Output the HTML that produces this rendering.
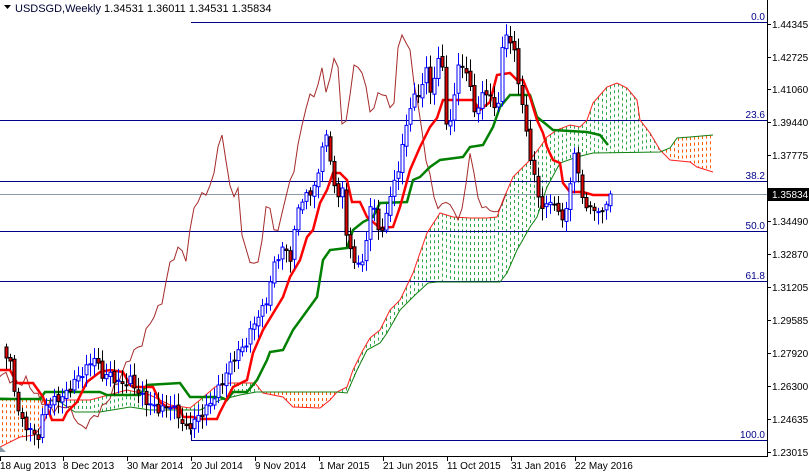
<!DOCTYPE html>
<html><head><meta charset="utf-8"><style>
html,body{margin:0;padding:0;background:#fff;width:809px;height:472px;overflow:hidden}
svg{display:block;font-family:"Liberation Sans",Tahoma,sans-serif}
</style></head><body>
<svg id="s" width="809" height="472" viewBox="0 0 809 472" xmlns="http://www.w3.org/2000/svg">
<rect width="809" height="472" fill="#fff"/>
<g id="cloud"></g>
<g id="fib" stroke="#00008b" stroke-width="1" shape-rendering="crispEdges">
<line x1="191" y1="22.5" x2="767" y2="22.5"/>
<line x1="0" y1="120.5" x2="767" y2="120.5"/>
<line x1="0" y1="181.5" x2="767" y2="181.5"/>
<line x1="0" y1="231.5" x2="767" y2="231.5"/>
<line x1="0" y1="281.5" x2="767" y2="281.5"/>
<line x1="191" y1="440.5" x2="767" y2="440.5"/>
<line x1="191.5" y1="430" x2="191.5" y2="440"/>
</g>
<line x1="0" y1="194.5" x2="767" y2="194.5" stroke="#8a9aa6" stroke-width="1" shape-rendering="crispEdges"/>
<g font-size="10" fill="#00008b" text-anchor="end">
<text x="765" y="20">0.0</text><text x="765" y="118">23.6</text><text x="765" y="179">38.2</text>
<text x="765" y="229">50.0</text><text x="765" y="279">61.8</text><text x="765" y="438">100.0</text>
</g>
<g id="lines"></g>
<g id="candles"></g>
<line x1="767.5" y1="0" x2="767.5" y2="456" stroke="#000" shape-rendering="crispEdges"/>
<line x1="0" y1="456.5" x2="768" y2="456.5" stroke="#000" shape-rendering="crispEdges"/>
<g id="axis" font-size="10" fill="#000"></g>
<rect x="768" y="188" width="41" height="13" fill="#000"/>
<text x="772" y="198" font-size="10" fill="#fff">1.35834</text>
<polygon points="4,5 11,5 7.5,9" fill="#000"/>
<text x="15" y="12" font-size="11" fill="#000"><tspan fill="#000033">USDSGD,Weekly</tspan>  1.34531 1.36011 1.34531 1.35834</text>
<polygon points="0,446 6,452 0,452" fill="#8a9aa6"/>
</svg>
<script>
(function(){
var NS="http://www.w3.org/2000/svg";
function el(p,t,a){var e=document.createElementNS(NS,t);for(var k in a)e.setAttribute(k,a[k]);p.appendChild(e);return e;}
function interp(pts,x){if(x<=pts[0][0])return pts[0][1];for(var i=1;i<pts.length;i++){if(x<=pts[i][0]){var a=pts[i-1],b=pts[i];return a[1]+(b[1]-a[1])*(x-a[0])/(b[0]-a[0]);}}return pts[pts.length-1][1];}
function pl(pts){return pts.map(function(p){return p[0]+","+p[1]}).join(" ");}
var ax=document.getElementById("axis");
var labs=[["1.44345",24],["1.42725",57],["1.41060",89],["1.39440",122],["1.37775",155],["1.36155",188],["1.34490",221],["1.32870",254],["1.31205",287],["1.29585",320],["1.27920",353],["1.26300",386],["1.24635",419],["1.23015",452]];
labs.forEach(function(l){if(l[0]!="1.36155"){el(ax,"text",{x:772,y:l[1]+4}).textContent=l[0];}el(ax,"line",{x1:767,x2:771,y1:l[1]+.5,y2:l[1]+.5,stroke:"#000"});});
var dl=[["18 Aug 2013",0],["8 Dec 2013",63],["30 Mar 2014",127],["20 Jul 2014",191],["9 Nov 2014",255],["1 Mar 2015",319],["21 Jun 2015",383],["11 Oct 2015",447],["31 Jan 2016",511],["22 May 2016",575]];
dl.forEach(function(d){el(ax,"text",{x:d[1],y:469}).textContent=d[0];el(ax,"line",{x1:d[1]+.5,x2:d[1]+.5,y1:456,y2:461,stroke:"#000"});});
var A=[[0,447],[20,437],[35,435],[45,420],[50,400],[90,400],[127,390],[150,395],[170,405],[190,408],[200,400],[215,387],[230,383],[255,383],[263,393],[283,397],[293,407],[320,408],[330,400],[337,392],[347,387],[353,370],[363,350],[370,338],[380,330],[390,310],[400,300],[413,273],[427,233],[440,213],[453,217],[470,218],[487,218],[497,217],[503,200],[513,177],[520,170],[530,160],[540,147],[547,137],[557,130],[570,125],[580,127],[587,120],[593,103],[607,87],[617,83],[627,88],[637,100],[640,120],[650,133],[660,150],[670,160],[690,162],[697,167],[713,172]];
var B=[[0,398],[45,400],[60,402],[75,412],[100,412],[130,407],[150,410],[200,410],[220,400],[240,395],[256,392],[337,392],[347,393],[357,370],[367,350],[380,343],[387,333],[400,310],[415,295],[428,283],[437,282],[500,282],[507,273],[517,250],[530,227],[537,217],[547,187],[560,163],[577,157],[593,153],[660,152],[670,148],[677,138],[690,137],[713,135]];
var cg=document.getElementById("cloud");
for(var x=2;x<=712;x+=4){var ya=interp(A,x),yb=interp(B,x);var up=ya<yb;el(cg,"line",{x1:x+.5,x2:x+.5,y1:Math.min(ya,yb),y2:Math.max(ya,yb),stroke:up?"#2aa84a":"#ff5a00","stroke-width":1,"stroke-dasharray":"3,3"});}
var lg=document.getElementById("lines");
el(lg,"polyline",{points:pl(A),fill:"none",stroke:"#ff2020","stroke-width":1});
el(lg,"polyline",{points:pl(B),fill:"none",stroke:"#108010","stroke-width":1});
var C=[[2,345],[10,365],[15,395],[20,420],[30,430],[37,440],[45,405],[55,400],[65,395],[75,380],[85,370],[95,355],[100,375],[110,375],[120,385],[130,380],[140,395],[150,405],[160,410],[170,405],[180,418],[185,430],[195,420],[205,410],[215,395],[225,375],[235,355],[245,345],[255,320],[265,305],[275,260],[284,247],[291,260],[297,207],[317,183],[324,127],[334,183],[337,210],[341,173],[347,247],[361,270],[372,197],[381,243],[384,217],[397,173],[411,100],[421,93],[424,63],[431,93],[441,47],[447,143],[457,70],[464,63],[476,117],[484,87],[497,113],[504,27],[514,53],[524,120],[531,163],[537,193],[544,212],[551,197],[557,213],[561,217],[567,210],[574,150],[581,197],[584,193],[587,213],[594,207],[601,217],[607,197],[610,194]];
var closes=[];for(var i=0;i<153;i++){var cx=2+4*i;closes.push(interp(C,cx)+Math.sin(i*2.3)*4);}
closes[152]=194;
var ch=[];for(var i=0;i<153;i++){var x2=2+4*i-104;if(x2>-5)ch.push([x2,closes[i].toFixed(1)]);}
el(lg,"polyline",{points:pl(ch),fill:"none",stroke:"#a52a2a","stroke-width":1});
var T=[[0,370],[10,370],[17,383],[33,383],[43,397],[52,420],[63,420],[67,412],[77,402],[87,382],[100,372],[110,370],[123,372],[130,385],[133,387],[153,387],[160,402],[167,407],[180,408],[183,417],[193,417],[200,419],[217,419],[220,412],[233,387],[247,380],[253,353],[263,330],[283,297],[290,277],[300,260],[307,237],[313,230],[320,203],[327,190],[333,173],[340,173],[347,180],[352,202],[360,202],[367,217],[380,228],[393,227],[400,207],[410,170],[420,147],[430,127],[437,118],[443,100],[473,100],[480,110],[490,102],[497,75],[510,73],[517,80],[523,80],[530,97],[537,120],[543,133],[547,147],[553,160],[560,163],[563,183],[570,192],[583,192],[593,195],[610,195]];
var K=[[0,399],[40,399],[45,392],[100,392],[107,395],[140,395],[147,385],[180,383],[190,397],[220,397],[227,400],[233,392],[247,392],[257,380],[267,360],[270,352],[283,350],[293,330],[317,297],[323,260],[330,250],[347,248],[353,230],[363,222],[373,217],[380,203],[407,202],[413,180],[420,177],[430,167],[440,160],[463,157],[470,147],[483,145],[493,127],[500,107],[510,95],[530,95],[537,117],[547,125],[553,130],[587,132],[600,135],[608,145]];
el(lg,"polyline",{points:pl(K),fill:"none",stroke:"#008000","stroke-width":2.5});
el(lg,"polyline",{points:pl(T),fill:"none",stroke:"#ff0000","stroke-width":2.5});
var cd=document.getElementById("candles");
for(var i=1;i<153;i++){var x=2+4*i;var o=closes[i-1]+Math.sin(i*1.7)*2,c=closes[i];var bt=Math.min(o,c),bb=Math.max(o,c);if(bb-bt<1)bb=bt+1;
var hi=bt-3-Math.abs(Math.sin(i*3.1))*9,lo=bb+3+Math.abs(Math.cos(i*2.7))*9;var bull=c<o;
el(cd,"line",{x1:x+.5,x2:x+.5,y1:hi,y2:lo,stroke:bull?"#0000ff":"#000","stroke-width":1});
el(cd,"rect",{x:x-1,y:bt,width:3,height:bb-bt,fill:bull?"#fff":"#e00000",stroke:bull?"#0000ff":"#000","stroke-width":1});}
})();
</script>
</body></html>
